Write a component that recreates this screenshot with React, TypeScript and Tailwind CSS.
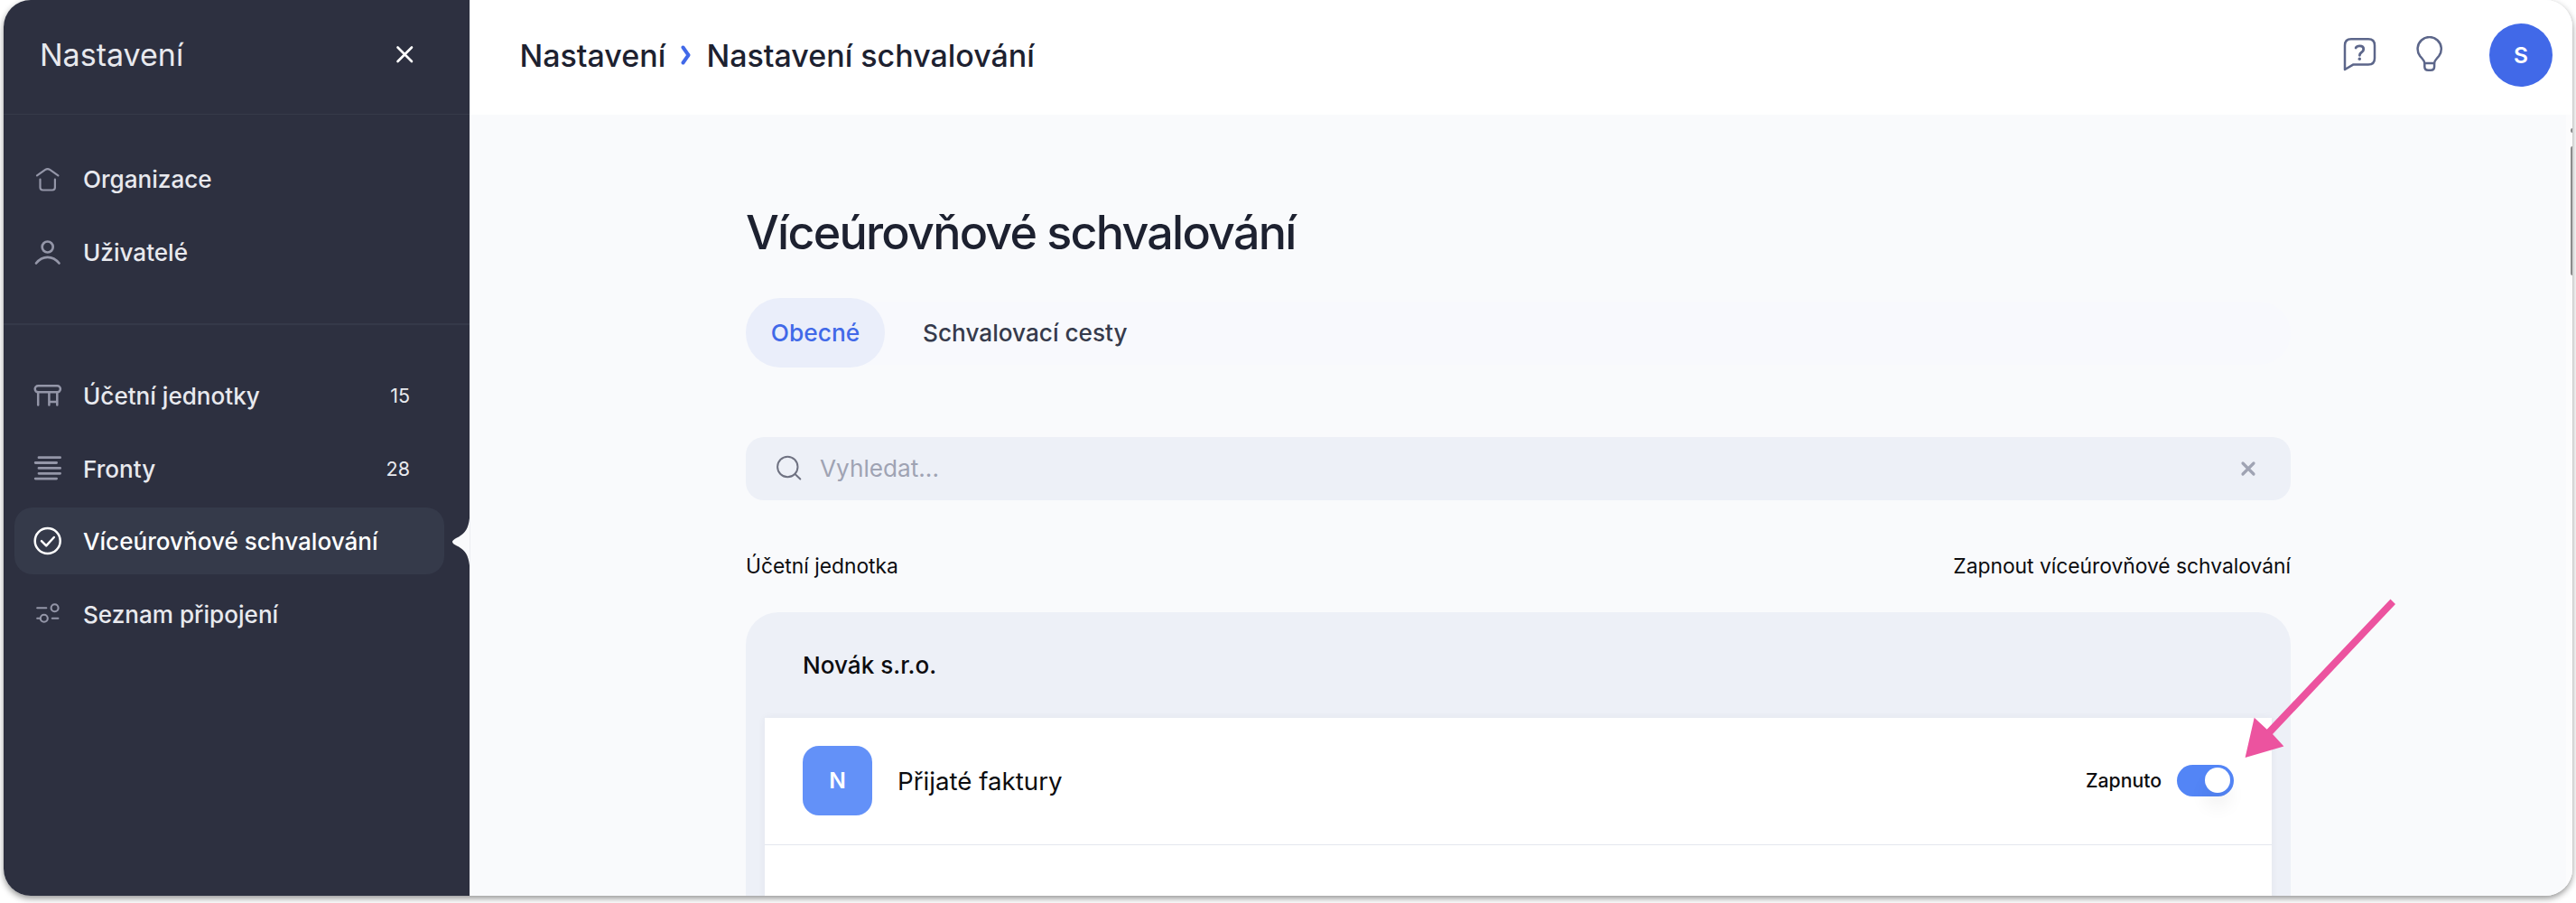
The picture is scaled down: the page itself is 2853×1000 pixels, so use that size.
import type { ReactNode } from "react";

type IconProps = { className?: string };

function HomeIcon({ className }: IconProps) {
  return (
    <svg className={className} width="32" height="32" viewBox="0 0 32 32" fill="none" stroke="currentColor" strokeWidth="2.2" strokeLinecap="round" strokeLinejoin="round">
      <path d="M4 12.4 13.2 5.9Q15.700 4.200 18.200 5.900L27.400 12.400" />
      <path d="M7.500 16.700v8.800q0 3 3 3h10.400q3 0 3-3V16.700" />
    </svg>
  );
}

function UserIcon({ className }: IconProps) {
  return (
    <svg className={className} width="32" height="32" viewBox="0 0 32 32" fill="none" stroke="currentColor" strokeWidth="2.7" strokeLinecap="round">
      <circle cx="15.7" cy="10.500" r="6" />
      <path d="M3 28.500Q8.300 21.800 15.700 21.800T28.500 28.500" />
    </svg>
  );
}

function DeskIcon({ className }: IconProps) {
  return (
    <svg className={className} width="32" height="32" viewBox="0 0 32 32" fill="none" stroke="currentColor" strokeWidth="2.5" strokeLinecap="round">
      <rect x="1.700" y="5.300" width="28.200" height="7" rx="3.500" />
      <path d="M5.200 12.300V26.500M17.400 12.300V26.500M26.300 12.300V26.500M17.400 22.900h8.900" />
    </svg>
  );
}

function QueueIcon({ className }: IconProps) {
  return (
    <svg className={className} width="32" height="32" viewBox="0 0 32 32" fill="none" stroke="currentColor" strokeWidth="2.8" strokeLinecap="round">
      <path d="M6 3.700h23.600M2.200 9.500h23.400M6 15.400h23.600M6 21.300h23.600M2.200 27.100h23.400" />
    </svg>
  );
}

function CheckIcon({ className }: IconProps) {
  return (
    <svg className={className} width="32" height="32" viewBox="0 0 32 32" fill="none" stroke="currentColor" strokeWidth="2.5" strokeLinecap="round" strokeLinejoin="round">
      <circle cx="15.700" cy="16" r="14" />
      <path d="m9 16.200 5.200 5.100L22.800 12" />
    </svg>
  );
}

function SlidersIcon({ className }: IconProps) {
  return (
    <svg className={className} width="32" height="32" viewBox="0 0 32 32" fill="none" stroke="currentColor" strokeWidth="2.1" strokeLinecap="round">
      <circle cx="23.600" cy="9.200" r="4" />
      <circle cx="11.800" cy="20.800" r="4" />
      <path d="M4.200 9.200H14.300M4.200 20.800H7.700M20.800 20.800h6.600" />
    </svg>
  );
}

type NavItemProps = { icon: ReactNode; label: string; count?: number; active?: boolean };

function NavItem({ icon, label, count, active }: NavItemProps) {
  return (
    <li className={active ? "flex h-[74px] items-center rounded-[20px] bg-[#353a4a] pr-[38px] pl-[21px] text-white" : "flex h-[74px] items-center rounded-[20px] pr-[38px] pl-[21px] text-[#e8e9ee]"}>
      <span className={active ? "text-white" : "text-[#9496a8]"}>{icon}</span>
      <span className="ml-[23px] flex-1 pt-[2px] text-[26.100px] font-medium whitespace-nowrap">{label}</span>
      {count !== undefined && <span className="pt-px text-[21.500px]">{count}</span>}
    </li>
  );
}

function Sidebar() {
  return (
    <aside className="relative flex w-[516px] shrink-0 flex-col bg-[#2d3040]">
      <div className="flex h-[127px] items-start justify-between border-b border-[#363a49] pt-[41px] pr-[61px] pl-[40px]">
        <span className="text-[34px] leading-[40px] text-[#e8e9ee]">Nastavení</span>
        <svg className="mt-[8px]" width="22" height="22" viewBox="0 0 22 22" fill="none" stroke="white" strokeWidth="2.600" strokeLinecap="round">
          <path d="m3.500 3.500 15.500 15.500M19 3.500 3.500 19" />
        </svg>
      </div>
      <ul className="flex h-[233px] flex-col gap-[7px] border-b-2 border-[#353949] pt-[34px] pr-[28px] pl-[12px]">
        <NavItem icon={<HomeIcon />} label="Organizace" />
        <NavItem icon={<UserIcon />} label="Uživatelé" />
      </ul>
      <ul className="flex flex-col gap-[6.500px] pt-[41px] pr-[28px] pl-[12px]">
        <NavItem icon={<DeskIcon />} label="Účetní jednotky" count={15} />
        <NavItem icon={<QueueIcon />} label="Fronty" count={28} />
        <NavItem icon={<CheckIcon />} label="Víceúrovňové schvalování" active />
        <NavItem icon={<SlidersIcon />} label="Seznam připojení" />
      </ul>
      <svg className="absolute top-[574px] right-0" width="20" height="52" viewBox="0 0 20 52" fill="#f9fafc">
        <path d="M20 0C18.500 12 15 17 6 21.500Q1 24 1 26T6 30.500C15 35 18.500 40 20 52Z" />
      </svg>
    </aside>
  );
}

function TopBar() {
  return (
    <header className="flex h-[127px] items-start bg-white pr-[22px] pl-[54.500px]">
      <nav className="flex items-center pt-[42px] text-[34px] leading-[40px] font-medium text-[#1d2130]">
        <span className="w-[162px]">Nastavení</span>
        <svg className="-mt-[2px] mr-[16px] ml-[15px]" width="14" height="24" viewBox="0 0 14 24" fill="none" stroke="#4169e8" strokeWidth="4" strokeLinecap="round" strokeLinejoin="round">
          <path d="m3.500 3.500 6 8.500-6 8.500" />
        </svg>
        <span>Nastavení schvalování</span>
      </nav>
      <div className="ml-auto flex items-start pt-[26px]">
        <svg className="mt-[14px] mr-[42px]" width="40" height="42" viewBox="0 0 40 42" fill="none" stroke="#5c668a" strokeWidth="2.500" strokeLinejoin="round">
          <path d="M4 37V10.300q0-7 7-7H30q7 0 7 7v14.100q0 7-7 7H13.500Z" />
          <path d="M16.200 12.900Q17.300 10.900 20.500 10.900q4.200 0 4.200 3.500 0 2.200-2.300 3.500-2 1.100-2 3.400" strokeWidth="2.900" strokeLinecap="round" />
          <circle cx="20.300" cy="25.300" r="1.700" fill="#5c668a" stroke="none" />
        </svg>
        <svg className="mt-[14px] mr-[50px]" width="32" height="40" viewBox="0 0 32 40" fill="none" stroke="#5c668a" strokeWidth="2.500" strokeLinejoin="round">
          <path d="M10.300 29.900C9.800 26.400 7.700 25.200 5.200 22A13.100 13.100 0 1 1 26.200 22C23.700 25.200 21.600 26.400 21.100 29.900Z" />
          <path d="M10.300 29.900v3.800q0 4 4 4h2.800q4 0 4-4v-3.800" />
        </svg>
        <div className="flex size-[70px] items-center justify-center rounded-full bg-[#4169e8] text-[24.500px] font-semibold text-white">S</div>
      </div>
    </header>
  );
}

function Content() {
  return (
    <section className="relative w-[1711px]">
      <h1 className="pt-[105px] text-[52px] leading-[52px] font-medium tracking-[-1.760px] text-[#1d2130]">Víceúrovňové schvalování</h1>
      <div className="mt-[46px] flex h-[77px] items-center">
        <div className="flex h-[70px] w-full items-center rounded-[36px] bg-[#f8f9fd]">
          <button className="h-[77px] w-[154px] rounded-[38px] bg-[#eaeefa] text-[26.300px] font-medium text-[#4169e8]">Obecné</button>
          <button className="ml-[42px] text-[26.200px] font-medium text-[#363b4c]">Schvalovací cesty</button>
        </div>
      </div>
      <div className="mt-[77px] flex h-[70px] items-center rounded-[20px] bg-[#edf0f7] pr-[37px] pl-[33px]">
        <svg width="30" height="30" viewBox="0 0 30 30" fill="none" stroke="#6f7282" strokeWidth="2" strokeLinecap="round">
          <circle cx="13.300" cy="13" r="11.200" />
          <path d="m21.500 21 5.800 5.500" />
        </svg>
        <span className="ml-[19px] flex-1 text-[26.200px] text-[#9fa3b3]">Vyhledat...</span>
        <svg width="20" height="20" viewBox="0 0 20 20" fill="none" stroke="#9fa3b3" strokeWidth="3.200" strokeLinecap="round">
          <path d="m4 4 12 12M16 4 4 16" />
        </svg>
      </div>
      <div className="mt-[53px] flex justify-between text-[22.800px] leading-[40px] text-[#0c0c0f]">
        <span>Účetní jednotka</span>
        <span>Zapnout víceúrovňové schvalování</span>
      </div>
      <div className="mt-[31px] rounded-t-[36px] bg-[#edf0f7] px-[21px]">
        <h2 className="h-[117px] pt-[39px] pl-[42px] text-[26.100px] leading-[40px] font-medium text-[#0c0c0f]">Novák s.r.o.</h2>
        <div className="h-[300px] bg-white shadow-[0_0_8px_rgba(46,48,64,0.060)]">
          <div className="flex h-[141px] items-center border-b border-[#e4e7ee] pr-[42px] pb-[2px] pl-[42px]">
            <div className="flex size-[77px] items-center justify-center rounded-[18px] bg-[#6391f8] text-[24.500px] font-semibold text-white">N</div>
            <span className="ml-[28px] flex-1 pt-[3px] text-[27.700px] text-[#0c0c0f]">Přijaté faktury</span>
            <span className="pt-[2px] text-[21.200px] font-medium text-[#0c0c0f]">Zapnuto</span>
            <div className="ml-[17px] flex h-[35px] w-[63px] items-center justify-end rounded-full bg-[#5385f6] pr-[4px]">
              <div className="size-[28.500px] rounded-full bg-white shadow-[0_16px_20px_rgba(0,0,0,0.060)]" />
            </div>
          </div>
        </div>
      </div>
      <svg className="absolute top-[533px] left-[1655px]" width="180" height="185" viewBox="0 0 180 185" fill="#ec539f">
        <path d="M166.500 3.500 172 9 36 153 48.400 166.500 5.600 179 15.700 134.700 29.700 147.800Z" />
      </svg>
    </section>
  );
}

export default function App() {
  return (
    <div className="h-[1000px] w-[2853px] overflow-hidden bg-white pl-[4px] font-['Inter',sans-serif]">
      <div className="flex h-[992px] w-[2845px] rounded-[30px] shadow-[0_3px_7px_rgba(0,0,0,0.420)]">
        <div className="flex h-full w-full overflow-hidden rounded-[30px]">
          <Sidebar />
          <main className="flex min-w-0 flex-1 flex-col border-l border-[#eceef2] bg-[#f9fafc]">
            <TopBar />
            <div className="flex min-h-0 flex-1">
              <div className="flex-1 pl-[305px]">
                <Content />
              </div>
              <div className="flex w-[7px] flex-col items-end bg-[#fcfcfd]">
                <div className="mt-[15px] h-[5px] w-[2px] rounded-l-full bg-[#8b8b8b]" />
                <div className="mt-[15px] h-[143px] w-[2px] rounded-l-full bg-[#8b8b8b]" />
              </div>
            </div>
          </main>
        </div>
      </div>
    </div>
  );
}
